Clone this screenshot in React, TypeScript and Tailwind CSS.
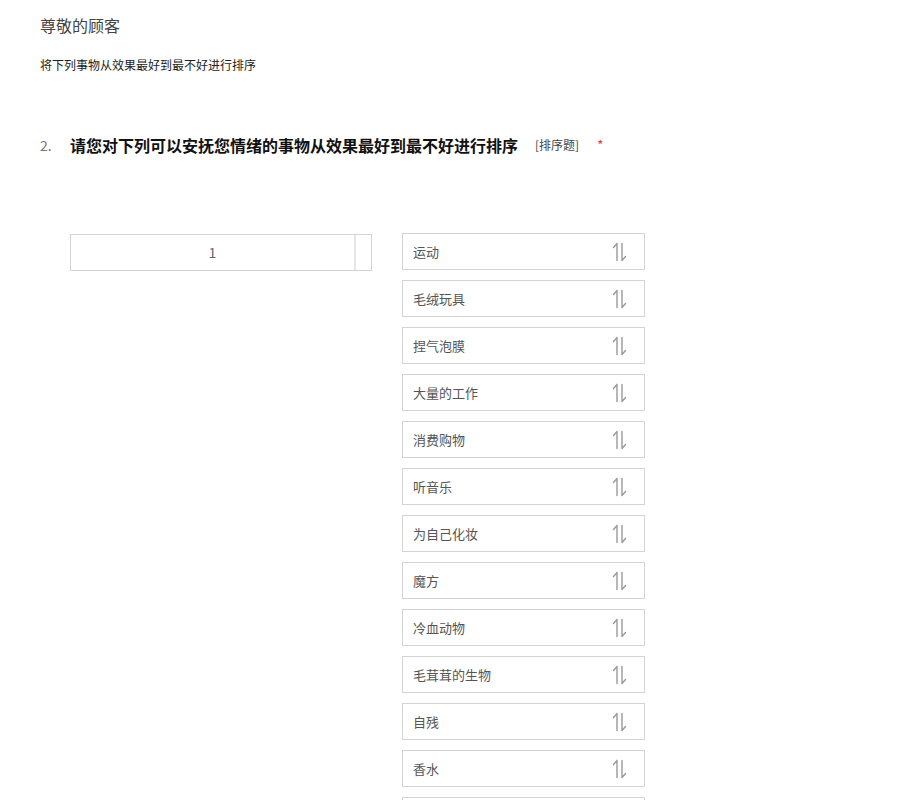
import React from "react";

const ITEMS = [
  "运动",
  "毛绒玩具",
  "捏气泡膜",
  "大量的工作",
  "消费购物",
  "听音乐",
  "为自己化妆",
  "魔方",
  "冷血动物",
  "毛茸茸的生物",
  "自残",
  "香水",
  "宠物",
];

function SortIcon() {
  return (
    <svg width="16" height="20" viewBox="0 0 16 20" fill="none" stroke="#9a9a9a" strokeWidth="1.4" strokeLinecap="round">
      <path d="M6 1.5 V18.5 M6 1.5 L2.5 5.5" />
      <path d="M11 1.5 V18.5 M11 18.5 L14.5 14.5" />
    </svg>
  );
}

export default function App() {
  return (
    <div className="h-[800px] overflow-hidden bg-white font-['Noto_Sans_CJK_SC','Noto_Sans',sans-serif] text-[#333]">
      <div className="px-10 pt-[15px]">
        <h1 className="text-[16px] leading-[20px] text-[#444]">尊敬的顾客</h1>
        <p className="mt-[22px] text-[12px] leading-[16px] text-[#222]">将下列事物从效果最好到最不好进行排序</p>

        <div className="mt-[60px] flex items-center">
          <span className="w-[30px] text-[14px] text-[#777]">2.</span>
          <span className="text-[16px] font-bold leading-[24px] text-[#111]">请您对下列可以安抚您情绪的事物从效果最好到最不好进行排序</span>
          <span className="ml-[17px] text-[12px] text-[#444]">[排序题]</span>
          <span className="ml-[18px] text-[13px] text-[#e33]">*</span>
        </div>

        <div className="mt-[76px] flex items-start pl-[30px]">
          <div className="mt-[1px] flex h-[37px] w-[302px] border border-[#d4d4d4]">
            <div className="flex flex-1 items-center justify-center text-[14px] text-[#666]">1</div>
            <div className="w-[17px] border-l-2 border-[#e6e6e6]" />
          </div>

          <div className="ml-[30px] flex w-[243px] flex-col gap-[10px]">
            {ITEMS.map((item) => (
              <div key={item} className="flex h-[37px] items-center justify-between border border-[#d4d4d4] pl-[10px] pr-[17px]">
                <span className="text-[13px] text-[#555]">{item}</span>
                <SortIcon />
              </div>
            ))}
          </div>
        </div>
      </div>
    </div>
  );
}
